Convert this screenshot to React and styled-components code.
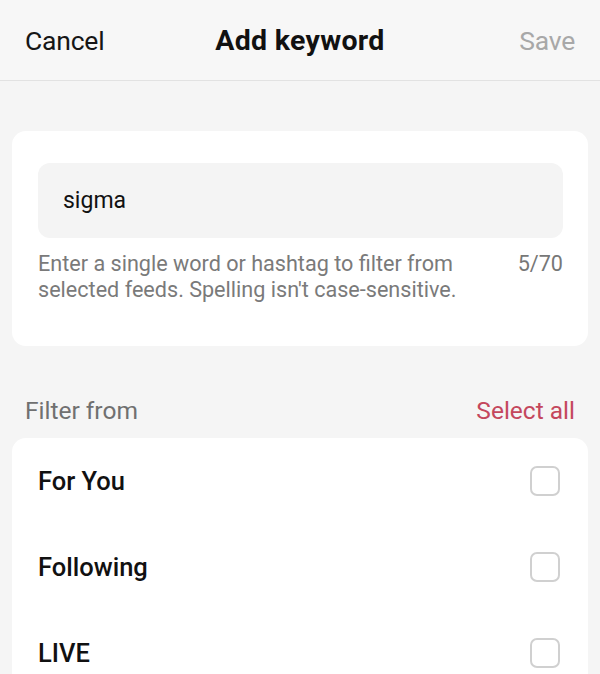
import React from "react";
import styled, {createGlobalStyle} from "styled-components";

const GlobalStyle = createGlobalStyle`
  html, body {
    margin: 0;
    padding: 0;
    background: #f5f5f5;
    font-family: Roboto, "Liberation Sans", sans-serif;
  }
`;

const Page = styled.div`
  width: 600px;
  height: 674px;
  overflow: hidden;
  background: #f5f5f5;
`;

const Header = styled.div`
  height: 80px;
  display: grid;
  grid-template-columns: 1fr auto 1fr;
  align-items: center;
  padding: 0 25px;
  border-bottom: 1px solid #e2e2e2;
  background: #f7f7f7;
`;

const HeaderButton = styled.span`
  font-size: 26.5px;
  color: ${props => props.disabled ? "#a8a8a8" : "#161616"};
  justify-self: ${props => props.disabled ? "end" : "start"};
  letter-spacing: -0.2px;
`;

const Title = styled.h1`
  margin: 0;
  font-size: 28.5px;
  font-weight: 700;
  color: #111;
  letter-spacing: 0.3px;
`;

const Body = styled.div`
  padding: 50px 12px 0;
`;

const Card = styled.div`
  background: #fff;
  border-radius: 14px;
  padding: ${props => props.padding || "0"};
`;

const Input = styled.div`
  height: 75px;
  border-radius: 12px;
  background: #f4f4f4;
  display: flex;
  align-items: center;
  padding: 0 25px;
  font-size: 23px;
  color: #111;
`;

const HelperRow = styled.div`
  display: flex;
  flex-direction: row;
  justify-content: space-between;
  margin-top: 13px;
  font-size: 21.6px;
  line-height: 26px;
  color: #7a7a7a;
`;

const HelperText = styled.p`
  margin: 0;
  width: 440px;
`;

const Counter = styled.span`
  color: #777;
`;

const SectionHeader = styled.div`
  display: flex;
  flex-direction: row;
  justify-content: space-between;
  align-items: center;
  height: 56px;
  margin-top: 36px;
  padding: 0 13px;
  font-size: 24.5px;
`;

const SectionLabel = styled.span`
  color: #707070;
`;

const SelectAll = styled.span`
  color: #c4475d;
`;

const Row = styled.div`
  height: 86px;
  display: flex;
  flex-direction: row;
  align-items: center;
  justify-content: space-between;
  padding: 0 28px 0 26px;
`;

const RowLabel = styled.span`
  font-size: 25.5px;
  font-weight: 500;
  color: #111;
`;

const Checkbox = styled.span`
  width: 26px;
  height: 26px;
  border: 2px solid #d0d0d0;
  border-radius: 7px;
`;

const feeds = ["For You", "Following", "LIVE"];

const App = () => (
	<Page>
		<GlobalStyle/>
		<Header>
			<HeaderButton>Cancel</HeaderButton>
			<Title>Add keyword</Title>
			<HeaderButton disabled>Save</HeaderButton>
		</Header>

		<Body>
			<Card padding="32px 25px 43px 26px">
				<Input>sigma</Input>
				<HelperRow>
					<HelperText>Enter a single word or hashtag to filter from selected feeds. Spelling isn't case-sensitive.</HelperText>
					<Counter>5/70</Counter>
				</HelperRow>
			</Card>

			<SectionHeader>
				<SectionLabel>Filter from</SectionLabel>
				<SelectAll>Select all</SelectAll>
			</SectionHeader>

			<Card>
				{feeds.map(feed => (
					<Row key={feed}>
						<RowLabel>{feed}</RowLabel>
						<Checkbox/>
					</Row>
				))}
			</Card>
		</Body>
	</Page>
);

export default App;
